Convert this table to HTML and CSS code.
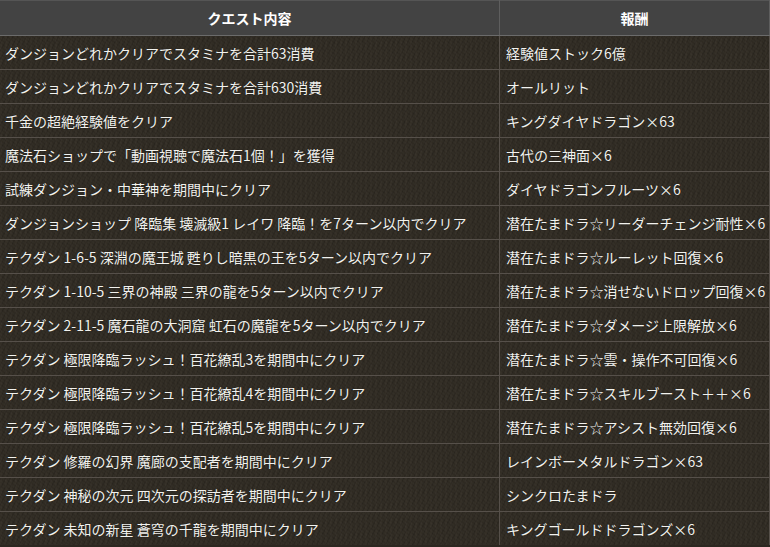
FILE: index.html
```html
<!DOCTYPE html>
<html lang="ja">
<head>
<meta charset="utf-8">
<link rel="stylesheet" href="styles.css">
</head>
<body>
<table class="quest">
  <thead>
    <tr><th class="c1">クエスト内容</th><th class="c2">報酬</th></tr>
  </thead>
  <tbody>
    <tr><td>ダンジョンどれかクリアでスタミナを合計63消費</td><td>経験値ストック6億</td></tr>
    <tr><td>ダンジョンどれかクリアでスタミナを合計630消費</td><td>オールリット</td></tr>
    <tr><td>千金の超絶経験値をクリア</td><td>キングダイヤドラゴン×63</td></tr>
    <tr><td>魔法石ショップで「動画視聴で魔法石1個！」を獲得</td><td>古代の三神面×6</td></tr>
    <tr><td>試練ダンジョン・中華神を期間中にクリア</td><td>ダイヤドラゴンフルーツ×6</td></tr>
    <tr><td>ダンジョンショップ 降臨集 壊滅級1 レイワ 降臨！を7ターン以内でクリア</td><td>潜在たまドラ☆リーダーチェンジ耐性×6</td></tr>
    <tr><td>テクダン 1-6-5 深淵の魔王城 甦りし暗黒の王を5ターン以内でクリア</td><td>潜在たまドラ☆ルーレット回復×6</td></tr>
    <tr><td>テクダン 1-10-5 三界の神殿 三界の龍を5ターン以内でクリア</td><td>潜在たまドラ☆消せないドロップ回復×6</td></tr>
    <tr><td>テクダン 2-11-5 魔石龍の大洞窟 虹石の魔龍を5ターン以内でクリア</td><td>潜在たまドラ☆ダメージ上限解放×6</td></tr>
    <tr><td>テクダン 極限降臨ラッシュ！百花繚乱3を期間中にクリア</td><td>潜在たまドラ☆雲・操作不可回復×6</td></tr>
    <tr><td>テクダン 極限降臨ラッシュ！百花繚乱4を期間中にクリア</td><td>潜在たまドラ☆スキルブースト＋＋×6</td></tr>
    <tr><td>テクダン 極限降臨ラッシュ！百花繚乱5を期間中にクリア</td><td>潜在たまドラ☆アシスト無効回復×6</td></tr>
    <tr><td>テクダン 修羅の幻界 魔廊の支配者を期間中にクリア</td><td>レインボーメタルドラゴン×63</td></tr>
    <tr><td>テクダン 神秘の次元 四次元の探訪者を期間中にクリア</td><td>シンクロたまドラ</td></tr>
    <tr><td>テクダン 未知の新星 蒼穹の千龍を期間中にクリア</td><td>キングゴールドドラゴンズ×6</td></tr>
  </tbody>
</table>
</body>
</html>
```

FILE: styles.css
```css
html, body {
  margin: 0;
  padding: 0;
  background: #2c2720;
}

.quest {
  width: 770px;
  border-collapse: collapse;
  table-layout: fixed;
  font-family: "Noto Sans CJK JP", "Noto Sans", sans-serif;
  font-size: 14px;
  color: #f2f2ee;
  background-color: #2f2a22;
  background-image:
    repeating-linear-gradient(37deg, rgba(255,255,255,0.025) 0 1px, transparent 1px 3px),
    repeating-linear-gradient(-61deg, rgba(0,0,0,0.12) 0 1px, transparent 1px 4px),
    repeating-linear-gradient(90deg, rgba(255,240,210,0.02) 0 2px, transparent 2px 5px);
}

.quest th {
  height: 34px;
  padding: 0;
  background: #434343;
  border-top: 1px solid #555;
  border-bottom: 1px solid #6b6b6b;
  font-weight: bold;
  font-size: 14px;
  color: #ffffff;
  text-align: center;
  vertical-align: middle;
  line-height: 1;
}

.quest .c1 {
  width: 499px;
  border-right: 1px solid #5e5e5e;
}

.quest .c2 {
  border-right: 1px solid #5e5e5e;
}

.quest td {
  height: 33px;
  padding: 0 5px;
  border-bottom: 1px solid #56504a;
  vertical-align: middle;
  white-space: nowrap;
  overflow: hidden;
  line-height: 1;
  text-shadow: 0 0 1px rgba(0,0,0,0.6);
}

.quest td:first-child {
  border-right: 1px solid #56504a;
}

.quest td:last-child {
  padding-left: 6px;
  border-right: 1px solid #56504a;
}

.quest tbody tr:last-child td {
  border-bottom: none;
}
```
